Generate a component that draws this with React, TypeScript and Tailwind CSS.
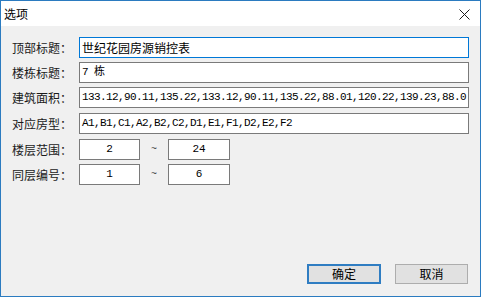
import React from 'react';

const cjk = "font-['Noto_Sans_CJK_SC',sans-serif]";
const mono = "font-['Liberation_Mono','Noto_Sans_CJK_SC',monospace]";

const Field: React.FC<{ label: string; value: string; focused?: boolean; mono?: boolean; className?: string }> = ({
  label,
  value,
  focused,
  mono: isMono,
  className = '',
}) => (
  <div className={`flex items-center h-[21px] ${className}`}>
    <div className={`w-[67px] text-[12px] text-[#1a1a1a] whitespace-nowrap ${cjk}`}>{label}</div>
    <div
      className={`w-[390px] h-full flex items-center px-[2px] bg-white border overflow-hidden whitespace-nowrap ${
        focused ? 'border-[#0078d7]' : 'border-[#7a7a7a]'
      }`}
    >
      <span className={isMono ? `text-[11px] tracking-[-0.6px] text-black ${mono}` : `text-[12px] text-black ${cjk}`}>
        {value}
      </span>
    </div>
  </div>
);

const RangeRow: React.FC<{ label: string; from: string; to: string; className?: string }> = ({
  label,
  from,
  to,
  className = '',
}) => (
  <div className={`flex items-center h-[21px] ${className}`}>
    <div className={`w-[67px] text-[12px] text-[#1a1a1a] whitespace-nowrap ${cjk}`}>{label}</div>
    <div className="w-[61px] h-full flex items-center justify-center bg-white border border-[#7a7a7a]">
      <span className={`text-[11px] text-black ${mono}`}>{from}</span>
    </div>
    <div className={`w-[28px] text-center text-[10px] text-[#444] ${mono}`}>~</div>
    <div className="w-[62px] h-full flex items-center justify-center bg-white border border-[#7a7a7a]">
      <span className={`text-[11px] text-black ${mono}`}>{to}</span>
    </div>
  </div>
);

const App: React.FC = () => {
  return (
    <div className="w-[481px] h-[297px] border border-[#2b7bc0] flex flex-col bg-[#f0f0f0]">
      {/* Title bar */}
      <div className="h-[25px] bg-white flex items-center justify-between pl-[3px] pr-[10px]">
        <span className={`text-[12px] text-black ${cjk}`}>选项</span>
        <svg width="11" height="11" viewBox="0 0 11 11" className="mt-[1px]">
          <path d="M0.5 0.5 L10.5 10.5 M10.5 0.5 L0.5 10.5" stroke="#1a1a1a" strokeWidth="1" />
        </svg>
      </div>

      {/* Body */}
      <div className="flex-1 flex flex-col pl-[11px] pt-[11px]">
        <Field label="顶部标题：" value="世纪花园房源销控表" focused />
        <Field className="mt-[4px]" label="楼栋标题：" value="7 栋" mono />
        <Field
          className="mt-[4px]"
          label="建筑面积："
          value="133.12,90.11,135.22,133.12,90.11,135.22,88.01,120.22,139.23,88.0"
          mono
        />
        <Field className="mt-[5px]" label="对应房型：" value="A1,B1,C1,A2,B2,C2,D1,E1,F1,D2,E2,F2" mono />
        <RangeRow className="mt-[5px]" label="楼层范围：" from="2" to="24" />
        <RangeRow className="mt-[4px]" label="同层编号：" from="1" to="6" />

        <div className="flex-1" />

        <div className="flex justify-end gap-[14px] pr-[12px] pb-[12px]">
          <button
            className={`w-[74px] h-[20px] bg-[#e1e1e1] border-2 border-[#2f7dc2] text-[12px] text-black flex items-center justify-center ${cjk}`}
          >
            确定
          </button>
          <button
            className={`w-[73px] h-[20px] bg-[#e1e1e1] border border-[#adadad] text-[12px] text-black flex items-center justify-center ${cjk}`}
          >
            取消
          </button>
        </div>
      </div>
    </div>
  );
};

export default App;
